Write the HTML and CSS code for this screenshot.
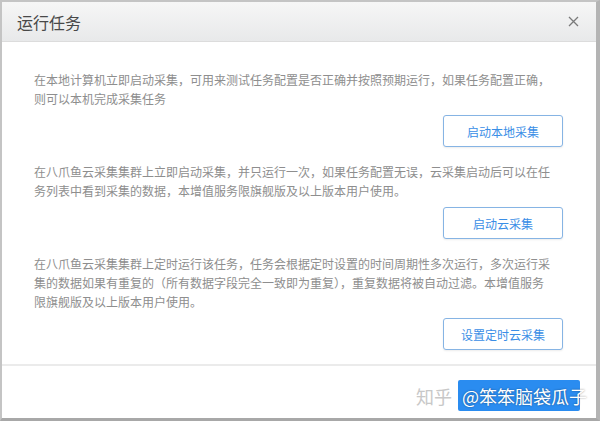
FILE: index.html
```html
<!DOCTYPE html>
<html lang="zh-CN">

<head>
    <meta charset="UTF-8">
    <title>运行任务</title>
    <link rel="stylesheet" href="styles.css">
</head>

<body>
    <div class="dialog">
        <div class="dialog-header">
            <span class="dialog-title">运行任务</span>
            <svg class="dialog-close" width="11" height="11" viewBox="0 0 11 11">
                <path d="M1 1 L10 10 M10 1 L1 10" stroke="#7a7a7a" stroke-width="1.3" fill="none" />
            </svg>
        </div>

        <div class="dialog-body">
            <div class="run-option">
                <p class="run-desc">在本地计算机立即启动采集，可用来测试任务配置是否正确并按照预期运行，如果任务配置正确，则可以本机完成采集任务</p>
                <div class="run-actions">
                    <button class="btn-outline">启动本地采集</button>
                </div>
            </div>
            <div class="run-option">
                <p class="run-desc">在八爪鱼云采集集群上立即启动采集，并只运行一次，如果任务配置无误，云采集启动后可以在任务列表中看到采集的数据，本增值服务限旗舰版及以上版本用户使用。</p>
                <div class="run-actions">
                    <button class="btn-outline">启动云采集</button>
                </div>
            </div>
            <div class="run-option">
                <p class="run-desc">在八爪鱼云采集集群上定时运行该任务，任务会根据定时设置的时间周期性多次运行，多次运行采集的数据如果有重复的（所有数据字段完全一致即为重复），重复数据将被自动过滤。本增值服务限旗舰版及以上版本用户使用。</p>
                <div class="run-actions">
                    <button class="btn-outline">设置定时云采集</button>
                </div>
            </div>
        </div>

        <div class="dialog-footer">
            <button class="btn-primary"></button>
        </div>

        <div class="watermark">
            <span class="wm-site">知乎</span>
            <span class="wm-user">@笨笨脑袋瓜子</span>
        </div>
    </div>
</body>

</html>
```

FILE: styles.css
```css
* {
    box-sizing: border-box;
}

html,
body {
    margin: 0;
    padding: 0;
    background: #fff;
}

body {
    font-family: "Noto Sans CJK SC", "Microsoft YaHei", sans-serif;
    color: #333;
}

.dialog {
    position: relative;
    width: 600px;
    height: 421px;
    border: 2px solid #c4c4c4;
    border-right: 4px solid #b4b4b4;
    border-bottom: 3px solid #a8a8a8;
    background: white;
    display: flex;
    flex-direction: column;
}

.dialog-header {
    height: 40px;
    display: flex;
    align-items: center;
    justify-content: space-between;
    padding: 0 17px 0 15px;
    background: linear-gradient(#f6f6f6, #e8e9ea);
    border-bottom: 1px solid #dcdcdc;
}

.dialog-title {
    font-size: 16px;
    color: #484848;
}

.dialog-close {
    display: block;
}

.dialog-body {
    padding: 28px 33px 14px 32px;
    border-bottom: 2px solid #ebebeb;
}

.run-option {
    margin-bottom: 15px;
}

.run-option:last-child {
    margin-bottom: 0;
}

.run-desc {
    margin: 0;
    width: 518px;
    font-size: 12px;
    line-height: 19px;
    color: #8e8e8e;
}

.run-actions {
    display: flex;
    justify-content: flex-end;
    margin-top: 7px;
}

.btn-outline {
    width: 120px;
    height: 32px;
    font-family: inherit;
    font-size: 12px;
    color: #3a8ee6;
    background: white;
    border: 1px solid #86b4e4;
    border-radius: 3px;
    box-shadow: 0 1px 2px rgba(0, 0, 0, 0.08);
    cursor: pointer;
}

.dialog-footer {
    flex: 1;
    display: flex;
    justify-content: flex-end;
    align-items: flex-start;
    padding: 14px 16px 0 0;
}

.btn-primary {
    width: 122px;
    height: 31px;
    background: #2a8cf0;
    border: none;
    border-radius: 2px;
    cursor: pointer;
}

.watermark {
    position: absolute;
    right: 9px;
    bottom: 11px;
    display: flex;
    align-items: center;
    gap: 10px;
    font-size: 18px;
    line-height: 22px;
}

.wm-site {
    color: #c8c8c8;
    text-shadow: 0 0 2px #fff;
}

.wm-user {
    color: white;
    text-shadow: 0 0 2px rgba(0, 0, 0, 0.45);
}
```
